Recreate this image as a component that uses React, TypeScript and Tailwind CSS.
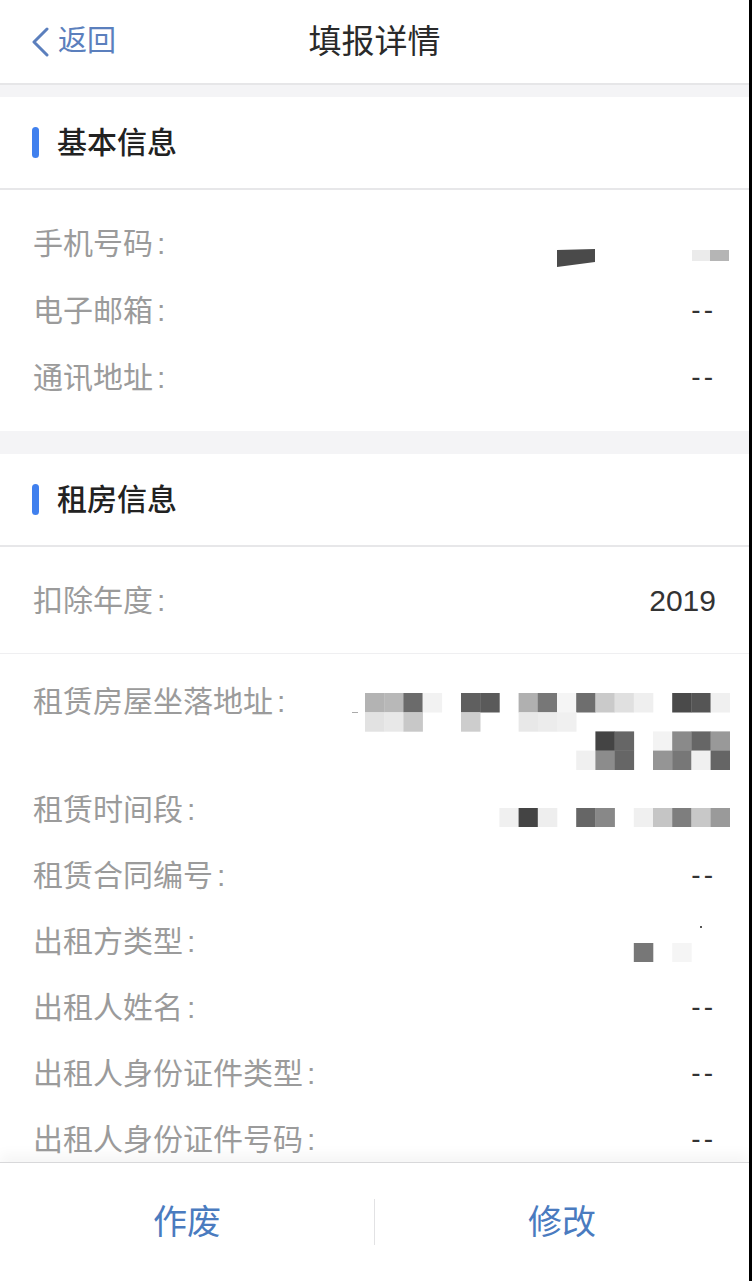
import type { ReactNode } from "react";

const FONT = "font-['Liberation_Sans','Noto_Sans_CJK_SC',sans-serif]";
const CELL = 19.2;

type CellRow = Record<number, string>;

// pixelated redaction blocks, drawn as svg cells
function Mosaic({ rows, className = "" }: { rows: CellRow[]; className?: string }) {
  return (
    <svg width={19 * CELL} height={rows.length * CELL} className={className}>
      {rows.map((row, r) =>
        Object.entries(row).map(([c, color]) => (
          <rect key={`${r}-${c}`} x={Number(c) * CELL} y={r * CELL} width={CELL + 0.3} height={CELL + 0.3} fill={color} />
        ))
      )}
    </svg>
  );
}

const addressRows: CellRow[] = [
  { 0: "#b3b3b3", 1: "#b8b8b8", 2: "#6b6b6b", 3: "#f2f2f2", 5: "#5f5f5f", 6: "#5a5a5a", 8: "#b0b0b0", 9: "#777777", 10: "#f5f5f5", 11: "#6e6e6e", 12: "#cacaca", 13: "#e0e0e0", 14: "#efefef", 16: "#4a4a4a", 17: "#555555", 18: "#f0f0f0" },
  { 0: "#e2e2e2", 1: "#e8e8e8", 2: "#c8c8c8", 5: "#cdcdcd", 8: "#e8e8e8", 9: "#ececec", 10: "#f0f0f0" },
  { 12: "#444444", 13: "#666666", 15: "#f3f3f3", 16: "#8a8a8a", 17: "#666666", 18: "#999999" },
  { 11: "#f0f0f0", 12: "#8c8c8c", 13: "#666666", 15: "#959595", 16: "#777777", 17: "#f0f0f0", 18: "#656565" },
];

const periodRows: CellRow[] = [
  { 7: "#f0f0f0", 8: "#444444", 9: "#eeeeee", 11: "#666666", 12: "#888888", 14: "#f0f0f0", 15: "#c5c5c5", 16: "#7e7e7e", 17: "#c8c8c8", 18: "#9a9a9a" },
];

const lessorRows: CellRow[] = [{ 14: "#777777", 16: "#f5f5f5" }];

function Label({ children }: { children: ReactNode }) {
  return (
    <div className="flex h-[66px] items-center text-[30px] text-[#9b9b9b]">
      {children}
      <span className="ml-[4px]">:</span>
    </div>
  );
}

function Row({ label, value = "--", tall = false }: { label: string; value?: ReactNode; tall?: boolean }) {
  return (
    <div className={`flex items-start justify-between px-[33px] ${tall ? "h-[67px]" : "h-[66px]"}`}>
      <Label>{label}</Label>
      {typeof value === "string" ? (
        <div className="flex h-[66px] items-center text-[28px] tracking-[3px] text-[#333]">{value}</div>
      ) : (
        value
      )}
    </div>
  );
}

function SectionHeader({ title }: { title: string }) {
  return (
    <div className="flex h-[93px] items-center gap-[18px] border-b-2 border-[#e7e7e9] bg-white px-[32px]">
      <div className="h-[31px] w-[7px] rounded-full bg-[#4080ee]" />
      <div className="text-[30px] font-medium text-[#222]">{title}</div>
    </div>
  );
}

export default function App() {
  return (
    <div className={`flex h-[1281px] w-[752px] bg-black ${FONT}`}>
      <div className="flex w-[749px] flex-col bg-[#f4f4f6]">
        <header className="flex h-[85px] shrink-0 items-center justify-between border-b-2 border-[#e6e6e8] bg-white px-[30px]">
          <div className="flex w-[150px] items-center gap-[8px] text-[#5b7fbd]">
            <svg width="20" height="30" viewBox="0 0 20 30" fill="none">
              <path d="M17 2 L4 15 L17 28" stroke="#5b7fbd" strokeWidth="3" strokeLinecap="round" strokeLinejoin="round" />
            </svg>
            <span className="text-[29px]">返回</span>
          </div>
          <div className="text-[33px] text-[#2a2a2a]">填报详情</div>
          <div className="w-[150px]" />
        </header>

        <main className="flex-1 overflow-hidden pt-[12px]">
          <SectionHeader title="基本信息" />
          <div className="bg-white py-[20px]">
            <Row
              tall
              label="手机号码"
              value={
                <svg width="174" height="18" className="mr-[-14px] mt-[39px]">
                  <polygon points="1,1 39,0 39,13 1,18" fill="#4a4a4a" />
                  <rect x="136" y="1" width="18" height="11" fill="#ebebeb" />
                  <rect x="154" y="1" width="19" height="11" fill="#b5b5b5" />
                </svg>
              }
            />
            <Row tall label="电子邮箱" />
            <Row tall label="通讯地址" />
          </div>

          <div className="h-[23px]" />
          <SectionHeader title="租房信息" />
          <div className="flex h-[107px] items-center justify-between border-b border-[#efeff1] bg-white px-[33px]">
            <div className="text-[30px] text-[#9b9b9b]">
              扣除年度<span className="ml-[4px]">:</span>
            </div>
            <div className="text-[30px] text-[#333]">2019</div>
          </div>

          <div className="bg-white pt-[14px]">
            <div className="flex h-[108px] items-start justify-between px-[33px]">
              <Label>租赁房屋坐落地址</Label>
              <div className="mr-[-14px] mt-[25px] flex items-start gap-[7px]">
                <div className="mt-[19px] h-[1px] w-[6px] bg-[#aaa]" />
                <Mosaic rows={addressRows} />
              </div>
            </div>
            <Row label="租赁时间段" value={<Mosaic rows={periodRows} className="mr-[-14px] mt-[32px]" />} />
            <Row label="租赁合同编号" />
            <Row
              label="出租方类型"
              value={
                <div className="mr-[-14px] mt-[18px] flex flex-col items-end">
                  <div className="mr-[28px] h-[2px] w-[2px] bg-[#555]" />
                  <Mosaic rows={lessorRows} className="mt-[15px]" />
                </div>
              }
            />
            <Row label="出租人姓名" />
            <Row label="出租人身份证件类型" />
            <Row label="出租人身份证件号码" />
          </div>
        </main>

        <footer className="relative flex h-[119px] shrink-0 items-center border-t border-[#d8d8da] bg-white shadow-[0_-8px_12px_rgba(0,0,0,0.04)]">
          <button className="flex-1 text-[34px] text-[#4a7bbf]">作废</button>
          <div className="h-[46px] w-px bg-[#e2e2e4]" />
          <button className="flex-1 text-[34px] text-[#4a7bbf]">修改</button>
        </footer>
      </div>
      <div className="w-[3px]" />
    </div>
  );
}
